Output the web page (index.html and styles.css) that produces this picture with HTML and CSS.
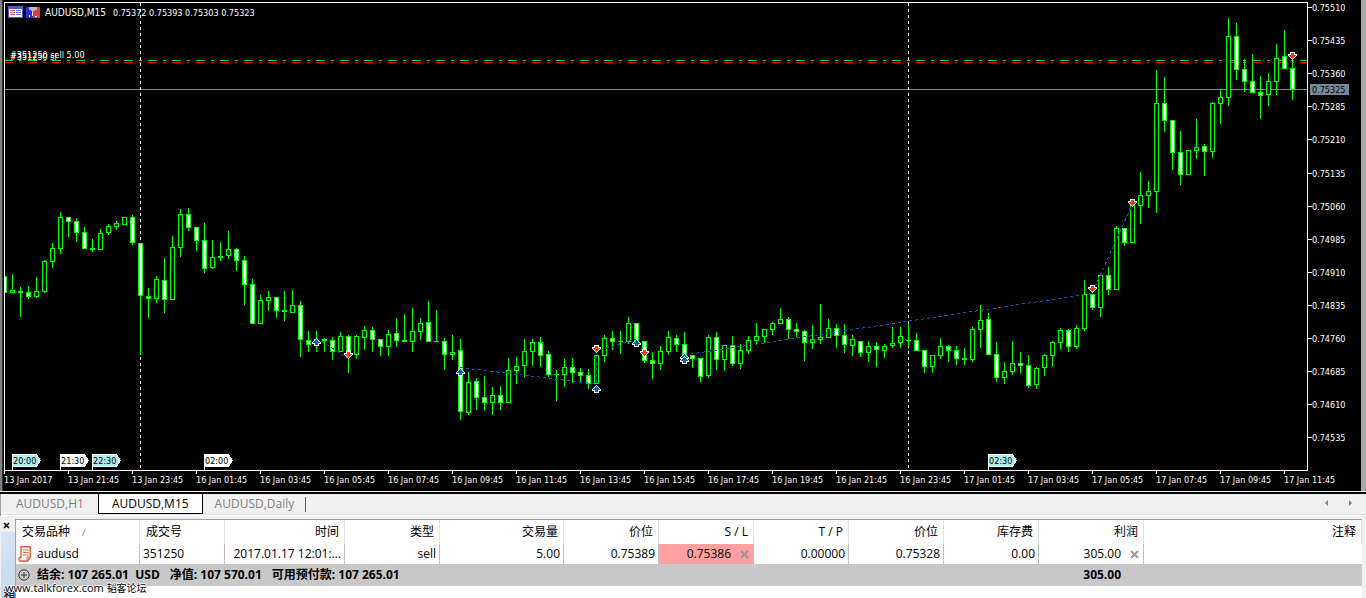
FILE: index.html
```html
<!DOCTYPE html>
<html lang="zh-CN">
<head>
<meta charset="utf-8">
<meta name="viewport" content="width=device-width, initial-scale=1">
<title>AUDUSD,M15</title>
<link rel="stylesheet" href="styles.css">
</head>
<body>
<main class="terminal">
  <section class="chart-window" aria-label="AUDUSD,M15">
    <svg class="chart" id="chart" viewBox="0 0 1359 491" role="img" aria-label="AUDUSD,M15"></svg>
  </section>

  <nav class="tabs">
    <button class="tab" type="button">AUDUSD,H1</button>
    <button class="tab tab-active" type="button">AUDUSD,M15</button>
    <button class="tab tab-last" type="button">AUDUSD,Daily</button>
    <div class="tab-scroll">
      <button class="scroll-btn" type="button" aria-label="向左"><svg width="5" height="8" viewBox="0 0 5 8"><path d="M4 1v6L1 4z"/></svg></button>
      <button class="scroll-btn" type="button" aria-label="向右"><svg width="5" height="8" viewBox="0 0 5 8"><path d="M1 1v6l3-3z"/></svg></button>
    </div>
  </nav>

  <section class="toolbox">
    <div class="side">
      <button class="side-close" type="button" aria-label="关闭"><svg width="7" height="7" viewBox="0 0 7 7"><path d="M1 1l5 5M6 1L1 6"/></svg></button>
      <div class="side-strip"><span class="side-title">工具箱</span></div>
    </div>
    <div class="panel">
      <table class="trades">
        <colgroup>
          <col class="c-symbol"><col class="c-ticket"><col class="c-time"><col class="c-mid"><col class="c-volume"><col class="c-mid"><col class="c-mid"><col class="c-mid"><col class="c-mid"><col class="c-mid"><col class="c-profit"><col>
        </colgroup>
        <thead>
          <tr>
            <th class="left">交易品种<span class="sort">∕</span></th>
            <th class="left">成交号</th>
            <th>时间</th><th>类型</th><th>交易量</th><th>价位</th><th>S / L</th><th>T / P</th><th>价位</th><th>库存费</th><th>利润</th><th>注释</th>
          </tr>
        </thead>
        <tbody>
          <tr>
            <td class="left symbol"><span class="symbol-cell"><svg width="14" height="16" viewBox="0 0 14 16"><path d="M3 .8h9.2v10.4L9.5 15H2.2C.5 15 .5 12 2 11.5h1z" fill="#fff3ee" stroke="#dc5b3a" stroke-width="1.4"/><path d="M5 4h5.500M5 6.500h5.500M5 9h5.500M9 14.500V11h3.500" fill="none" stroke="#e0704f"/></svg>audusd</span></td>
            <td class="left ticket">351250</td>
            <td class="time">2017.01.17 12:01:...</td>
            <td>sell</td><td>5.00</td><td>0.75389</td>
            <td class="stop"><span class="with-x">0.75386<button class="cell-x" type="button" aria-label="删除止损"><svg width="9" height="9" viewBox="0 0 9 9"><path d="M1 1l7 7M8 1L1 8"/></svg></button></span></td>
            <td>0.00000</td><td>0.75328</td><td>0.00</td>
            <td><span class="with-x">305.00<button class="cell-x" type="button" aria-label="平仓"><svg width="9" height="9" viewBox="0 0 9 9"><path d="M1 1l7 7M8 1L1 8"/></svg></button></span></td>
            <td></td>
          </tr>
        </tbody>
        <tfoot>
          <tr>
            <td class="left symbol" colspan="10"><span class="balance"><svg width="12" height="12" viewBox="0 0 12 12"><circle cx="6" cy="6" r="5.200"/><path d="M3 6h6M6 3v6"/></svg><span>结余: 107 265.01&nbsp; USD</span><span>净值: 107 570.01</span><span>可用预付款: 107 265.01</span></span></td>
            <td class="total">305.00</td>
            <td></td>
          </tr>
        </tfoot>
      </table>
    </div>
    <div class="watermark">www.talkforex.com <span class="watermark-name">韬客论坛</span></div>
  </section>
</main>
<script src="chart.js"></script>
</body>
</html>
```

FILE: styles.css
```css
* { box-sizing: border-box; }
body {
  margin: 0;
  background: #f0f0f0;
  color: #000;
  font-family: "Open Sans", "Noto Sans CJK SC", sans-serif;
  font-size: 12px;
}
button {
  margin: 0;
  padding: 0;
  border: 0;
  background: none;
  font: inherit;
  color: inherit;
}
.terminal {
  display: flex;
  flex-direction: column;
  height: 100vh;
  overflow: hidden;
}

/* Chart */
.chart-window {
  flex: none;
  padding-left: 2px;
  padding-right: 5px;
  background: linear-gradient(to right, #808080 2px, #a9a9a9 2px);
}
.chart {
  display: block;
  width: 100%;
  height: auto;
  background: #000;
}
.chart path { shape-rendering: crispEdges; }
.chart text {
  font-family: "DejaVu Sans Condensed", "DejaVu Sans", sans-serif;
  font-size: 9px;
  fill: #fff;
}
.chart .dark { fill: #000; }
.chart .symbol-name { font-size: 10px; }
.frame { fill: none; stroke: #fff; }
.edge { fill: none; stroke: #333; }
.period { stroke: #fff; stroke-dasharray: 3 3; }
.order { stroke: #32cd32; stroke-dasharray: 9 6 3 6; }
.stop-line { stroke: #f00; stroke-dasharray: 9 6 3 6; }
.price { stroke: #778899; }
.price-box { fill: #778899; }
.candle { stroke: #0f0; fill: #000; }
.candle-down { fill: #fff; }
.deal { fill: none; stroke: #0a5fb4; stroke-dasharray: 3 3; }
.buy { fill: #0a5fb4; stroke: #fff; }
.sell { fill: #e0401e; stroke: #fff; }
.tag { fill: #fff; stroke: #fff; }
.tag-blue { fill: #afeeee; }

/* Chart tabs */
.tabs {
  display: flex;
  flex: none;
  height: 27px;
  margin-top: 1px;
  padding: 0 8px 0 2px;
  border-top: 2px solid #000;
  border-bottom: 3px solid #f0f0f0;
  background: #f0f0f0;
  box-shadow: inset 1px 0 #a0a0a0, inset 0 -1px #fff, inset 0 -2px #e0e0e0;
  line-height: 20px;
}
.tab {
  height: 20px;
  padding: 0 14px;
  color: #808080;
}
.tab-active {
  border: 1px solid #000;
  border-top: 0;
  background: #fff;
  color: #000;
  padding: 0 13px;
}
.tab-last {
  position: relative;
  padding: 0 12px;
}
.tab-last::after {
  content: "";
  position: absolute;
  right: 0;
  top: 3px;
  height: 15px;
  border-right: 1px solid #606060;
}
.tab-scroll {
  display: flex;
  align-items: center;
  gap: 19px;
  height: 18px;
  margin-left: auto;
  padding-right: 5px;
}
.scroll-btn { display: flex; fill: #808080; }

/* Toolbox */
.toolbox {
  position: relative;
  display: flex;
  flex: 1;
  min-height: 79px;
}
.side {
  display: flex;
  flex-direction: column;
  width: 15px;
  padding-left: 1px;
}
.side-close {
  display: flex;
  align-items: center;
  justify-content: center;
  height: 13px;
  padding-right: 3px;
  flex: none;
}
.side-close svg { stroke: #000; stroke-width: 1.5; }
.side-strip {
  flex: 1;
  overflow: hidden;
  background: linear-gradient(#d8e4f3, #c6d8ec);
  padding: 54px 0 0 1px;
}
.side-title {
  writing-mode: vertical-rl;
  line-height: 12px;
}
.panel {
  flex: 1;
  margin-right: 4px;
  border-top: 1px solid #a0a0a0;
  border-left: 1px solid #a0a0a0;
  background: #fff;
}
.trades {
  width: 100%;
  table-layout: fixed;
  border-collapse: collapse;
}
.c-symbol, .c-volume { width: 124px; }
.c-ticket { width: 85px; }
.c-time { width: 120px; }
.c-mid { width: 95px; }
.c-profit { width: 105px; }
.trades th,
.trades td {
  padding: 0 4px;
  border: 0;
  text-align: right;
  font-weight: 400;
  white-space: nowrap;
  overflow: hidden;
  line-height: 20px;
}
.trades th {
  height: 24px;
  padding: 0 6px;
  box-shadow: inset -1px 0 #e0e0e0;
}
.trades tbody td {
  height: 20px;
  box-shadow: inset -1px 0 #c0c0c0;
}
.trades tbody td:last-child { box-shadow: none; }
.trades .left { text-align: left; }
.trades .ticket { padding-left: 3px; }
.trades .symbol { padding-left: 2px; }
.sort { margin-left: 12px; color: #808080; font-size: 10px; }
.symbol-cell, .balance, .with-x { display: flex; align-items: center; }
.symbol-cell { gap: 5px; }
.with-x { justify-content: flex-end; gap: 9px; padding-right: 1px; }
.cell-x { display: flex; }
.cell-x svg { stroke: #999; stroke-width: 2; }
.trades .stop { background: #ff9f9f; }
.trades tfoot { background: #c8c8c8; }
.trades tfoot td {
  height: 22px;
  font-weight: 700;
}
.trades tfoot .total { padding-right: 23px; }
.balance span + span { margin-left: 10px; }
.balance svg { margin-right: 7px; fill: none; stroke: #333; }
.watermark {
  position: absolute;
  left: 5px;
  bottom: 1px;
  font-size: 11px;
  line-height: 18px;
  text-shadow: 1px 0 #fff, -1px 0 #fff, 0 1px #fff, 0 -1px #fff;
}
.watermark-name { font-size: 10px; }
```

FILE: chart.js
```js
// One row per M15 bar: direction (u = rising, d = falling), high, body top, body bottom, low.
const bars = `d 276 276 292 292|u 274 290 292 292|u 287 291 292 316|d 286 292 296 298|u 277 291 296 297|u 260 261 291 292|u 243 248 261 267|u 212 217 248 253|d 217 217 221 236|d 218 221 232 241|d 227 232 248 248|u 239 248 249 251|u 229 233 249 249|u 224 226 232 234|u 221 223 226 229|u 217 217 224 224|d 215 217 242 244|d 243 243 295 354|d 288 296 298 317|u 276 279 298 302|d 258 280 299 312|u 236 247 299 299|u 209 214 247 256|d 208 214 227 230|d 227 227 240 250|d 223 240 268 272|u 240 257 267 268|u 242 256 257 260|u 231 249 255 258|d 248 249 260 270|d 256 260 284 304|d 279 284 323 323|u 295 300 323 323|u 291 297 300 310|d 297 297 310 317|u 291 310 311 320|u 290 305 312 312|d 301 305 339 356|d 331 340 344 351|u 331 339 340 351|u 338 339 340 351|d 337 340 351 359|u 332 336 351 351|d 335 336 356 372|u 335 336 354 358|u 326 330 337 349|d 327 330 339 351|d 339 339 346 355|u 330 334 346 355|d 318 333 340 346|u 314 340 341 341|u 308 331 341 351|u 318 323 331 339|d 301 322 341 341|u 310 341 341 341|d 338 341 354 369|u 335 352 354 359|d 339 350 411 419|u 372 382 412 414|d 378 381 397 409|d 376 397 402 410|u 387 395 402 414|d 386 395 402 409|u 358 370 402 402|u 357 366 370 383|u 339 351 365 376|u 339 342 351 365|d 337 342 355 366|d 351 354 374 376|u 370 374 374 400|u 359 367 374 386|d 358 367 372 382|d 368 372 375 381|d 369 375 383 388|u 355 355 383 383|u 335 338 355 361|d 331 338 341 349|u 331 341 341 353|u 317 323 341 343|d 323 323 341 341|d 341 341 360 362|d 352 360 363 378|u 346 351 363 369|u 331 337 351 354|d 335 338 344 351|d 332 344 358 358|d 355 355 358 367|d 358 358 376 381|u 335 337 375 377|d 332 337 359 369|u 345 345 359 370|d 336 345 363 365|u 344 350 363 368|u 336 340 350 353|u 323 336 340 344|u 329 329 336 342|u 322 323 329 334|u 308 319 323 323|d 317 319 329 338|d 323 329 331 336|d 330 331 342 360|u 325 339 342 348|u 304 337 339 343|u 319 328 337 337|d 324 328 335 347|d 324 335 344 352|u 335 339 345 355|d 341 341 352 356|u 341 346 352 361|d 342 346 349 366|u 344 346 350 357|u 327 343 345 347|u 327 336 342 347|u 324 340 340 345|d 333 340 350 350|d 350 350 366 372|u 355 355 366 372|u 338 346 355 358|d 345 346 350 361|d 346 350 358 364|u 348 358 359 364|u 327 329 359 361|u 305 320 329 347|d 313 319 354 354|d 342 354 377 381|u 362 371 377 383|u 341 363 371 374|d 352 363 365 373|d 355 365 385 387|u 367 368 384 388|u 354 355 367 375|u 341 342 355 366|u 328 330 342 349|d 329 330 346 351|u 325 328 346 348|u 280 294 328 330|d 294 294 307 309|u 274 275 307 316|d 267 275 289 294|u 226 228 289 289|d 228 228 242 245|u 205 205 242 242|u 172 195 205 223|u 181 191 195 207|u 70 103 191 212|d 77 103 120 131|d 120 120 152 169|d 131 152 174 184|u 150 150 174 174|u 119 147 150 158|d 144 146 151 175|u 102 103 151 157|u 89 97 103 123|u 18 36 97 105|d 23 36 69 79|d 59 69 81 91|d 54 81 92 92|d 76 92 95 118|u 73 81 94 105|u 44 58 81 94|d 30 56 68 68|d 60 68 89 99`
  .split("|").map(row => row.split(" "));

const chart = document.getElementById("chart");
const out = [];
const path = (cls, d) => out.push(`<path class="${cls}" d="${d}"/>`);
const text = (x, y, s, cls = "") => out.push(`<text x="${x}" y="${y}" class="${cls}">${s}</text>`);

path("order", "M4 60.5H1307");
path("stop-line", "M4 62.5H1307");
path("price", "M4 89.5H1307");
path("period", "M140.5 3V470M908.5 3V470");

bars.forEach(([dir, high, top, bottom, low], i) => {
  const x = 4.5 + 8 * i;
  const t = +top + 0.5, b = +bottom + 0.5;
  path("candle", `M${x} ${high}V${+low + 1}`);
  const left = i === 0 ? x : x - 2;
  if (t === b) {
    path("candle", `M${left - 0.5} ${t}H${x + 2.5}`);
  } else {
    path(dir === "d" ? "candle candle-down" : "candle", `M${left} ${t}H${x + 2}V${b}H${left}Z`);
  }
});

path("deal", "M316 338L348 358M460 367.5L596.5 384V351L636 339L644 353M684 355L1092 293.500L1132 205");

const up = (x, y) => path("buy", `M${x + 0.5} ${y - 3.5}l4 4v1h-2v2h-4v-2h-2v-1z`);
const down = (x, y) => path("sell", `M${x + 0.5} ${y + 4.5}l-4 -4v-1h2v-2h4v2h2v1z`);
[[316, 342], [460, 372], [596, 389], [636, 343], [684, 357], [684, 360]].forEach(p => up(...p));
[[348, 354], [596, 348], [644, 352], [1092, 288], [1132, 202], [1292, 55]].forEach(p => down(...p));

[[12, "20:00", 1], [60, "21:30", 0], [92, "22:30", 1], [204, "02:00", 0], [988, "02:30", 1]].forEach(([x, label, blue]) => {
  path(blue ? "tag tag-blue" : "tag", `M${x + 0.5} 470V454.5h24l4 6l-4 6h-24`);
  text(x + 1, 464, label, "dark");
});

path("frame", "M1307.5 470.5H4.5V2.5H1307.5V470.5");
path("edge", "M2.5 0V491");

const hours = ["13 Jan 2017", "13 Jan 21:45", "13 Jan 23:45"];
for (let h = 1; h < 24; h += 2) hours.push(`16 Jan ${String(h).padStart(2, "0")}:45`);
for (let h = 1; h < 12; h += 2) hours.push(`17 Jan ${String(h).padStart(2, "0")}:45`);
hours.forEach((label, i) => {
  path("frame", `M${4.5 + 64 * i} 470V474`);
  text(4 + 64 * i, 483, label);
});

for (let i = 0; i < 14; i++) {
  const y = Math.round(7 + 33.1 * i);
  path("frame", `M1308 ${y + 0.5}H1312`);
  text(1312, y + 4, ((75510 - 75 * i) / 100000).toFixed(5));
}
out.push('<rect class="price-box" x="1310" y="84" width="39" height="11"/>');
text(1312, 93, "0.75325", "dark");

text(45, 16, "AUDUSD,M15", "symbol-name");
text(113, 16, "0.75372 0.75393 0.75303 0.75323");
text(10, 58, "#351250 sell 5.00");
text(10, 60, "#351250 sl");

out.push(`<g shape-rendering="crispEdges">
<rect x="8" y="6" width="15" height="12" fill="#4a5ad0"/><rect x="9" y="9" width="13" height="8" fill="#fff"/>
<path d="M10 10.500h5M10 12.500h5M10 14.500h5" stroke="#e06050"/>
<path d="M16 10.500h5M16 12.500h5M16 14.500h5" stroke="#5070e0"/>
<rect x="26" y="7" width="7" height="11" fill="#2a30d8"/><rect x="33" y="7" width="7" height="11" fill="#d04038"/>
<path d="M29 7h8v3h-2v1h-4v-1h-2z" fill="#b8b8b8"/><path d="M32 11h1v5h-1z" fill="#ddd"/><path d="M29 15h1v2h-1zM35 16h2v1h-2z" fill="#fff"/></g>`);

// The drawing keeps window coordinates; the left window edge takes two pixels.
chart.setAttribute("viewBox", "2 0 1359 491");
chart.innerHTML = out.join("");
```
